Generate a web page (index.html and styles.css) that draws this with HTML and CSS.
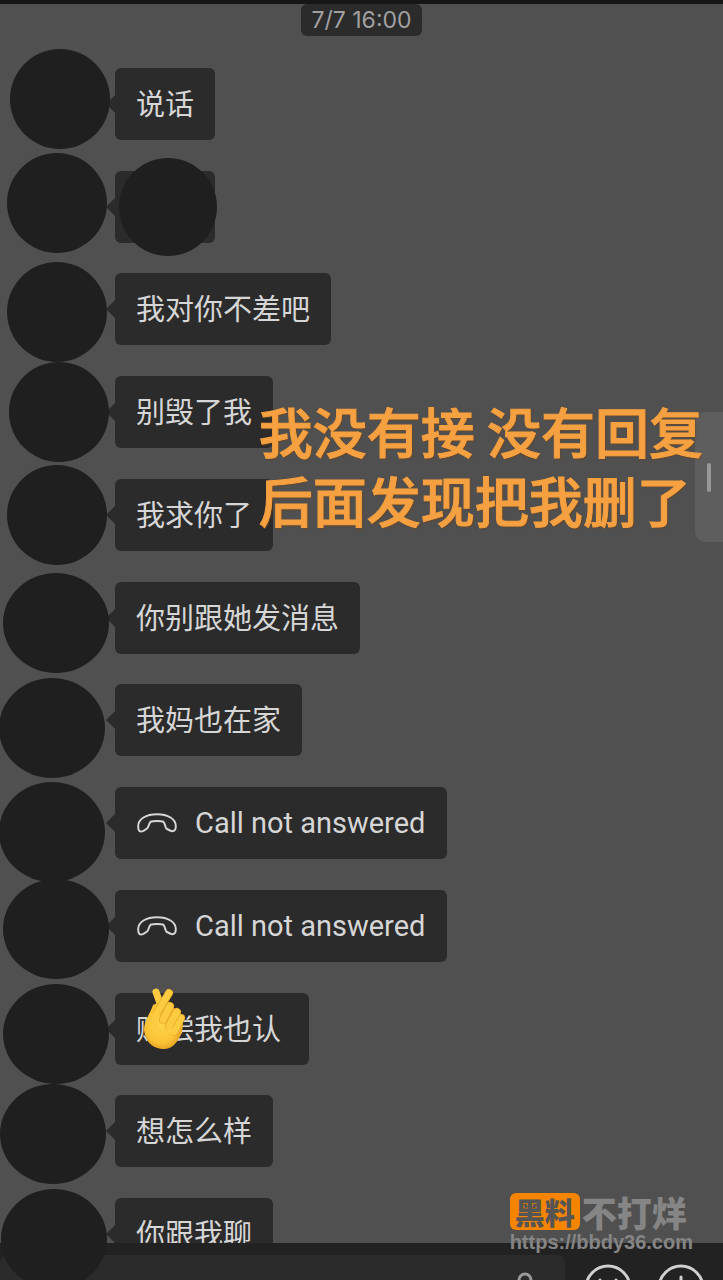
FILE: index.html
```html
<!DOCTYPE html>
<html lang="zh-CN">
<head>
  <meta charset="UTF-8" />
  <title>Chat</title>
  <meta name="viewport" content="width=device-width, initial-scale=1.0" />
  <link rel="stylesheet" href="styles.css">
</head>
<body>
  <main class="chat">
    <time class="timestamp">7/7 16:00</time>

    <ul class="messages">
      <li class="bubble">说话</li>
      <li class="bubble covered">你好</li>
      <li class="bubble">我对你不差吧</li>
      <li class="bubble">别毁了我</li>
      <li class="bubble">我求你了</li>
      <li class="bubble">你别跟她发消息</li>
      <li class="bubble">我妈也在家</li>
      <li class="bubble call">
        <svg class="phone" viewBox="0 0 40 20"><path d="M1.200 13C1.200 6 9 1.200 20 1.200S38.800 6 38.800 13C39 18 36 19 33 17.500L30 16C28 15 28.500 11 26.500 8.800C24 7.800 16 7.800 13.500 8.800C11.500 11 12 14 10 15.500L6.500 17.800C3 19.500 1 18 1.200 13Z"/></svg>
        Call not answered
      </li>
      <li class="bubble call">
        <svg class="phone" viewBox="0 0 40 20"><path d="M1.200 13C1.200 6 9 1.200 20 1.200S38.800 6 38.800 13C39 18 36 19 33 17.500L30 16C28 15 28.500 11 26.500 8.800C24 7.800 16 7.800 13.500 8.800C11.500 11 12 14 10 15.500L6.500 17.800C3 19.500 1 18 1.200 13Z"/></svg>
        Call not answered
      </li>
      <li class="bubble">赔偿我也认&nbsp;</li>
      <li class="bubble">想怎么样</li>
      <li class="bubble">你跟我聊</li>
    </ul>
  </main>

  <footer class="toolbar">
    <div class="field">
      <input type="text" aria-label="Message">
      <svg class="voice" viewBox="0 0 20 20"><circle cx="10" cy="9" r="6"/></svg>
    </div>
    <div class="tools">
      <button class="tool" aria-label="Emoji">
        <svg viewBox="0 0 48 48"><circle cx="24" cy="24" r="22"/><path d="M16 16v2M32 16v2"/></svg>
      </button>
      <button class="tool" aria-label="More">
        <svg viewBox="0 0 48 48"><circle cx="24" cy="24" r="22"/><path d="M24 13v22M13 24h22"/></svg>
      </button>
    </div>
  </footer>

  <button class="side-handle" aria-label="Open panel"></button>

  <p class="caption">我没有接 没有回复<br>后面发现把我删了</p>

  <!-- stickers dropped freely over the chat -->
  <svg class="stickers" viewBox="0 0 240 1290" aria-hidden="true">
    <defs>
      <radialGradient id="skin" cx="45%" cy="45%" r="60%">
        <stop offset="0" stop-color="#ffd64c"/>
        <stop offset="0.700" stop-color="#fbc235"/>
        <stop offset="1" stop-color="#e39b1c"/>
      </radialGradient>
    </defs>
    <g class="covers">
      <ellipse cx="60" cy="99" rx="50" ry="50"/>
      <ellipse cx="57" cy="203" rx="50" ry="50"/>
      <ellipse cx="168" cy="207" rx="49" ry="49"/>
      <ellipse cx="57" cy="312" rx="50" ry="50"/>
      <ellipse cx="59" cy="412" rx="50" ry="50"/>
      <ellipse cx="57" cy="515" rx="50" ry="50"/>
      <ellipse cx="56" cy="623" rx="53" ry="50"/>
      <ellipse cx="52" cy="728" rx="53" ry="50"/>
      <ellipse cx="52" cy="832" rx="53" ry="50"/>
      <ellipse cx="56" cy="929" rx="53" ry="50"/>
      <ellipse cx="56" cy="1034" rx="53" ry="50"/>
      <ellipse cx="53" cy="1134" rx="53" ry="50"/>
      <ellipse cx="54" cy="1239" rx="53" ry="50"/>
    </g>
    <g class="hand">
      <path class="finger" d="M156 992L161 1006"/>
      <path fill="url(#skin)" d="M153 1005C162 1000 172 1004 178 1012C184 1018 184 1026 181 1034C177 1044 171 1050 162 1049C151 1048 145 1040 144 1030C144 1021 150 1014 153 1005Z"/>
      <path class="finger-edge" d="M169 993L157 1013"/>
      <path class="finger" d="M169 993L157 1013"/>
      <path class="finger-edge" d="M181 1018L174 1032"/>
      <path class="finger" d="M181 1018L174 1032"/>
      <path class="finger-edge" d="M177 1012L169 1026"/>
      <path class="finger" d="M177 1012L169 1026"/>
      <path class="finger-edge" d="M170 1006L163 1020"/>
      <path class="finger" d="M170 1006L163 1020"/>
      <path class="palm" d="M156 1016C150 1030 158 1036 172 1031"/>
    </g>
  </svg>

  <div class="watermark">
    <div class="brand"><span class="badge">黑料</span><span>不打烊</span></div>
    <div class="url">https://bbdy36.com</div>
  </div>
</body>
</html>
```

FILE: styles.css
```css
* {
  box-sizing: border-box;
  margin: 0;
  padding: 0;
}

body {
  position: relative;
  display: flex;
  flex-direction: column;
  height: 100vh;
  overflow: hidden;
  background-color: #505050;
  color: #d6d6d6;
  font-family: Inter, "Noto Sans CJK SC", sans-serif;
}

.chat {
  flex: 1;
  min-height: 0;
  overflow: hidden;
  border-top: 4px solid #161616;
  display: flex;
  flex-direction: column;
}

.timestamp {
  align-self: center;
  padding: 0 10px;
  border-radius: 6px;
  background-color: #2b2b2b;
  color: #a0a0a0;
  font-size: 23px;
  line-height: 32px;
}

.messages {
  display: flex;
  flex-direction: column;
  align-items: flex-start;
  gap: 31px;
  padding: 32px 20px 0 115px;
  list-style: none;
}

.bubble {
  position: relative;
  flex-shrink: 0;
  padding: 0 21px 4px;
  border-radius: 6px;
  background-color: #2b2b2b;
  font-family: "Noto Sans CJK SC", sans-serif;
  font-size: 29px;
  line-height: 68px;
}

.bubble:nth-child(4n + 2) {
  margin-bottom: -1px;
}

.bubble::before {
  content: "";
  position: absolute;
  top: 27px;
  left: -9px;
  border: 9px solid transparent;
  border-left: 0;
  border-right-color: #2b2b2b;
}

.covered {
  color: transparent;
}

.call {
  display: flex;
  align-items: center;
  gap: 18px;
  padding: 0 22px;
  font-family: Roboto, sans-serif;
  line-height: 72px;
}

.phone {
  width: 40px;
  height: 20px;
  fill: none;
  stroke: #d6d6d6;
  stroke-width: 2;
}

.toolbar {
  display: flex;
  align-items: flex-start;
  gap: 19px;
  height: 37px;
  padding-right: 18px;
  overflow: hidden;
  background-color: #222222;
}

.field {
  position: relative;
  flex: 1;
  margin-top: 12px;
}

.field input {
  display: block;
  width: 100%;
  height: 64px;
  padding: 0 60px 0 20px;
  border: 0;
  border-radius: 8px;
  background-color: #2b2b2b;
  color: #d6d6d6;
  font-size: 28px;
}

.voice {
  position: absolute;
  top: 16px;
  right: 30px;
  width: 20px;
  height: 20px;
  fill: none;
  stroke: #999999;
  stroke-width: 3;
}

.tools {
  display: flex;
  gap: 25px;
  margin-top: 21px;
}

.tool {
  width: 48px;
  height: 48px;
  border: 0;
  background: none;
  cursor: pointer;
}

.tool svg {
  display: block;
  fill: none;
  stroke: #d0d0d0;
  stroke-width: 3;
  stroke-linecap: round;
}

.side-handle {
  position: absolute;
  top: 412px;
  right: 0;
  width: 28px;
  height: 130px;
  border: 0;
  border-radius: 10px 0 0 10px;
  background-color: #5e5e5e;
}

.side-handle::before {
  content: "";
  display: block;
  width: 4px;
  height: 29px;
  margin: 0 auto;
  border-radius: 2px;
  background-color: #989898;
}

.caption {
  position: absolute;
  top: 396px;
  right: 20px;
  color: #f5a041;
  font-family: "Noto Sans CJK SC", sans-serif;
  font-size: 54px;
  font-weight: 500;
  line-height: 69px;
  text-shadow: 1px 1px 2px #6b4420;
  -webkit-text-stroke: 1px #f5a041;
}

.stickers {
  position: absolute;
  top: 0;
  left: 0;
  width: 240px;
  height: 1290px;
}

.covers {
  fill: #1f1f1f;
}

.finger,
.finger-edge,
.palm {
  fill: none;
  stroke: #fdcb40;
  stroke-width: 7;
  stroke-linecap: round;
}

.finger-edge {
  stroke: #dc9a20;
  stroke-width: 8;
}

.watermark {
  position: absolute;
  right: 30px;
  bottom: 26px;
  color: #858585;
  font-weight: bold;
}

.brand {
  display: flex;
  align-items: center;
  gap: 2px;
  font-family: "Noto Sans CJK SC", sans-serif;
  font-size: 35px;
  font-weight: 900;
  line-height: 37px;
}

.badge {
  padding: 0 5px;
  border-radius: 6px;
  background-color: #f58400;
  color: #555555;
  font-size: 30px;
}

.url {
  font-family: "Liberation Sans", sans-serif;
  font-size: 20px;
  line-height: 24px;
}
```
